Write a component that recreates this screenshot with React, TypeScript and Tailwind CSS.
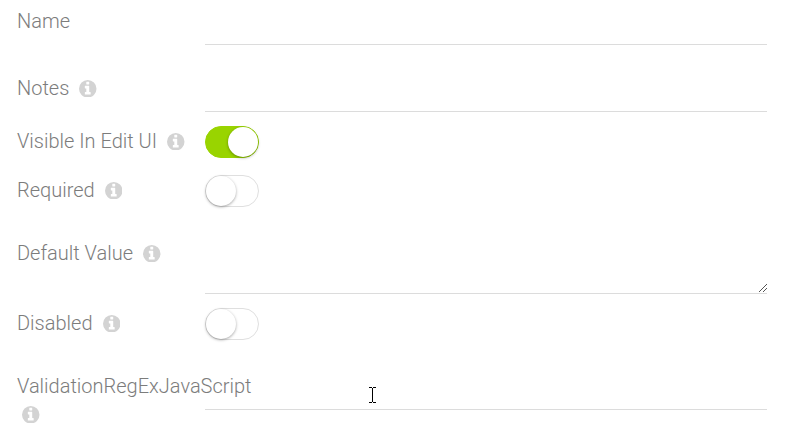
import React from "react";

function InfoIcon({ className = "" }: { className?: string }) {
  return (
    <svg viewBox="128 128 1536 1536" className={`mt-px h-[17.5px] w-[17.5px] shrink-0 fill-[#d3d3d3] ${className}`} aria-hidden="true">
      <path
        fillRule="evenodd"
        d="M128 896a768 768 0 1 0 1536 0a768 768 0 1 0-1536 0zM1152 1376v-160q0-14-9-23t-23-9h-96v-512q0-14-9-23t-23-9h-320q-14 0-23 9t-9 23v160q0 14 9 23t23 9h96v320h-96q-14 0-23 9t-9 23v160q0 14 9 23t23 9h448q14 0 23-9t9-23zM1024 480v-160q0-14-9-23t-23-9h-192q-14 0-23 9t-9 23v160q0 14 9 23t23 9h192q14 0 23-9t9-23z"
      />
    </svg>
  );
}

function Label({ text, info = true }: { text: string; info?: boolean }) {
  return (
    <div className="flex h-7 w-[188px] shrink-0 items-center whitespace-nowrap leading-7">
      <span>{text}</span>
      {info && <InfoIcon className="ml-2.5" />}
    </div>
  );
}

function Toggle({ on = false }: { on?: boolean }) {
  return (
    <button
      role="switch"
      aria-checked={on}
      className={`flex h-8 w-[54px] items-center rounded-full border ${
        on ? "justify-end border-[#99d400] bg-[#99d400]" : "border-[#dfdfdf] bg-white"
      }`}
    >
      <span className="h-[30px] w-[30px] rounded-full bg-white shadow-[0_1px_3px_rgba(0,0,0,0.35)]" />
    </button>
  );
}

function Cursor() {
  return (
    <svg width="7" height="16" viewBox="0 0 7 16" shapeRendering="crispEdges" className="absolute left-[164px] top-[15px] fill-black">
      <path d="M0 0h3v1H0zM4 0h3v1H4zM3 1h1v14H3zM0 15h3v1H0zM4 15h3v1H4z" />
    </svg>
  );
}

export default function App() {
  return (
    <form className="h-[429px] w-[787px] overflow-hidden bg-white pl-[17px] pr-5 font-['Roboto',sans-serif] text-[20px] font-light text-[#7c7c7c]">
      <div className="flex h-[45px] pt-[7px]">
        <Label text="Name" info={false} />
        <div className="flex-1 border-b border-[#dcdcdc]" />
      </div>
      <div className="flex h-[67px] pt-[29px]">
        <Label text="Notes" />
        <div className="flex-1 border-b border-[#dcdcdc]" />
      </div>
      <div className="flex h-[49px] items-start pt-3.5">
        <div className="pt-px"><Label text="Visible In Edit UI" /></div>
        <Toggle on />
      </div>
      <div className="flex h-[49px] items-start pt-3.5">
        <div className="pt-px"><Label text="Required" /></div>
        <Toggle />
      </div>
      <div className="flex h-[84px] pt-[29px]">
        <Label text="Default Value" />
        <div className="flex flex-1 items-end justify-end border-b border-[#dcdcdc]">
          <svg width="8" height="8" viewBox="0 0 8 8" shapeRendering="crispEdges" className="mb-px fill-[#555555]">
            <path d="M7 0h1v1H7zM6 1h1v1H6zM5 2h1v1H5zM4 3h1v1H4zM3 4h1v1H3zM2 5h1v1H2zM1 6h1v1H1zM0 7h1v1H0zM7 4h1v1H7zM6 5h1v1H6zM5 6h1v1H5zM4 7h1v1H4z" />
          </svg>
        </div>
      </div>
      <div className="flex h-[63px] items-start pt-3.5">
        <div className="pt-px"><Label text="Disabled" /></div>
        <Toggle />
      </div>
      <div className="flex pt-[15px]">
        <div className="w-[188px] shrink-0 whitespace-nowrap leading-7">
          <div>ValidationRegExJavaScript</div>
          <div className="flex h-7 items-center pl-[5px]"><InfoIcon /></div>
        </div>
        <div className="relative h-[38px] flex-1 border-b border-[#dcdcdc]">
          <Cursor />
        </div>
      </div>
    </form>
  );
}
